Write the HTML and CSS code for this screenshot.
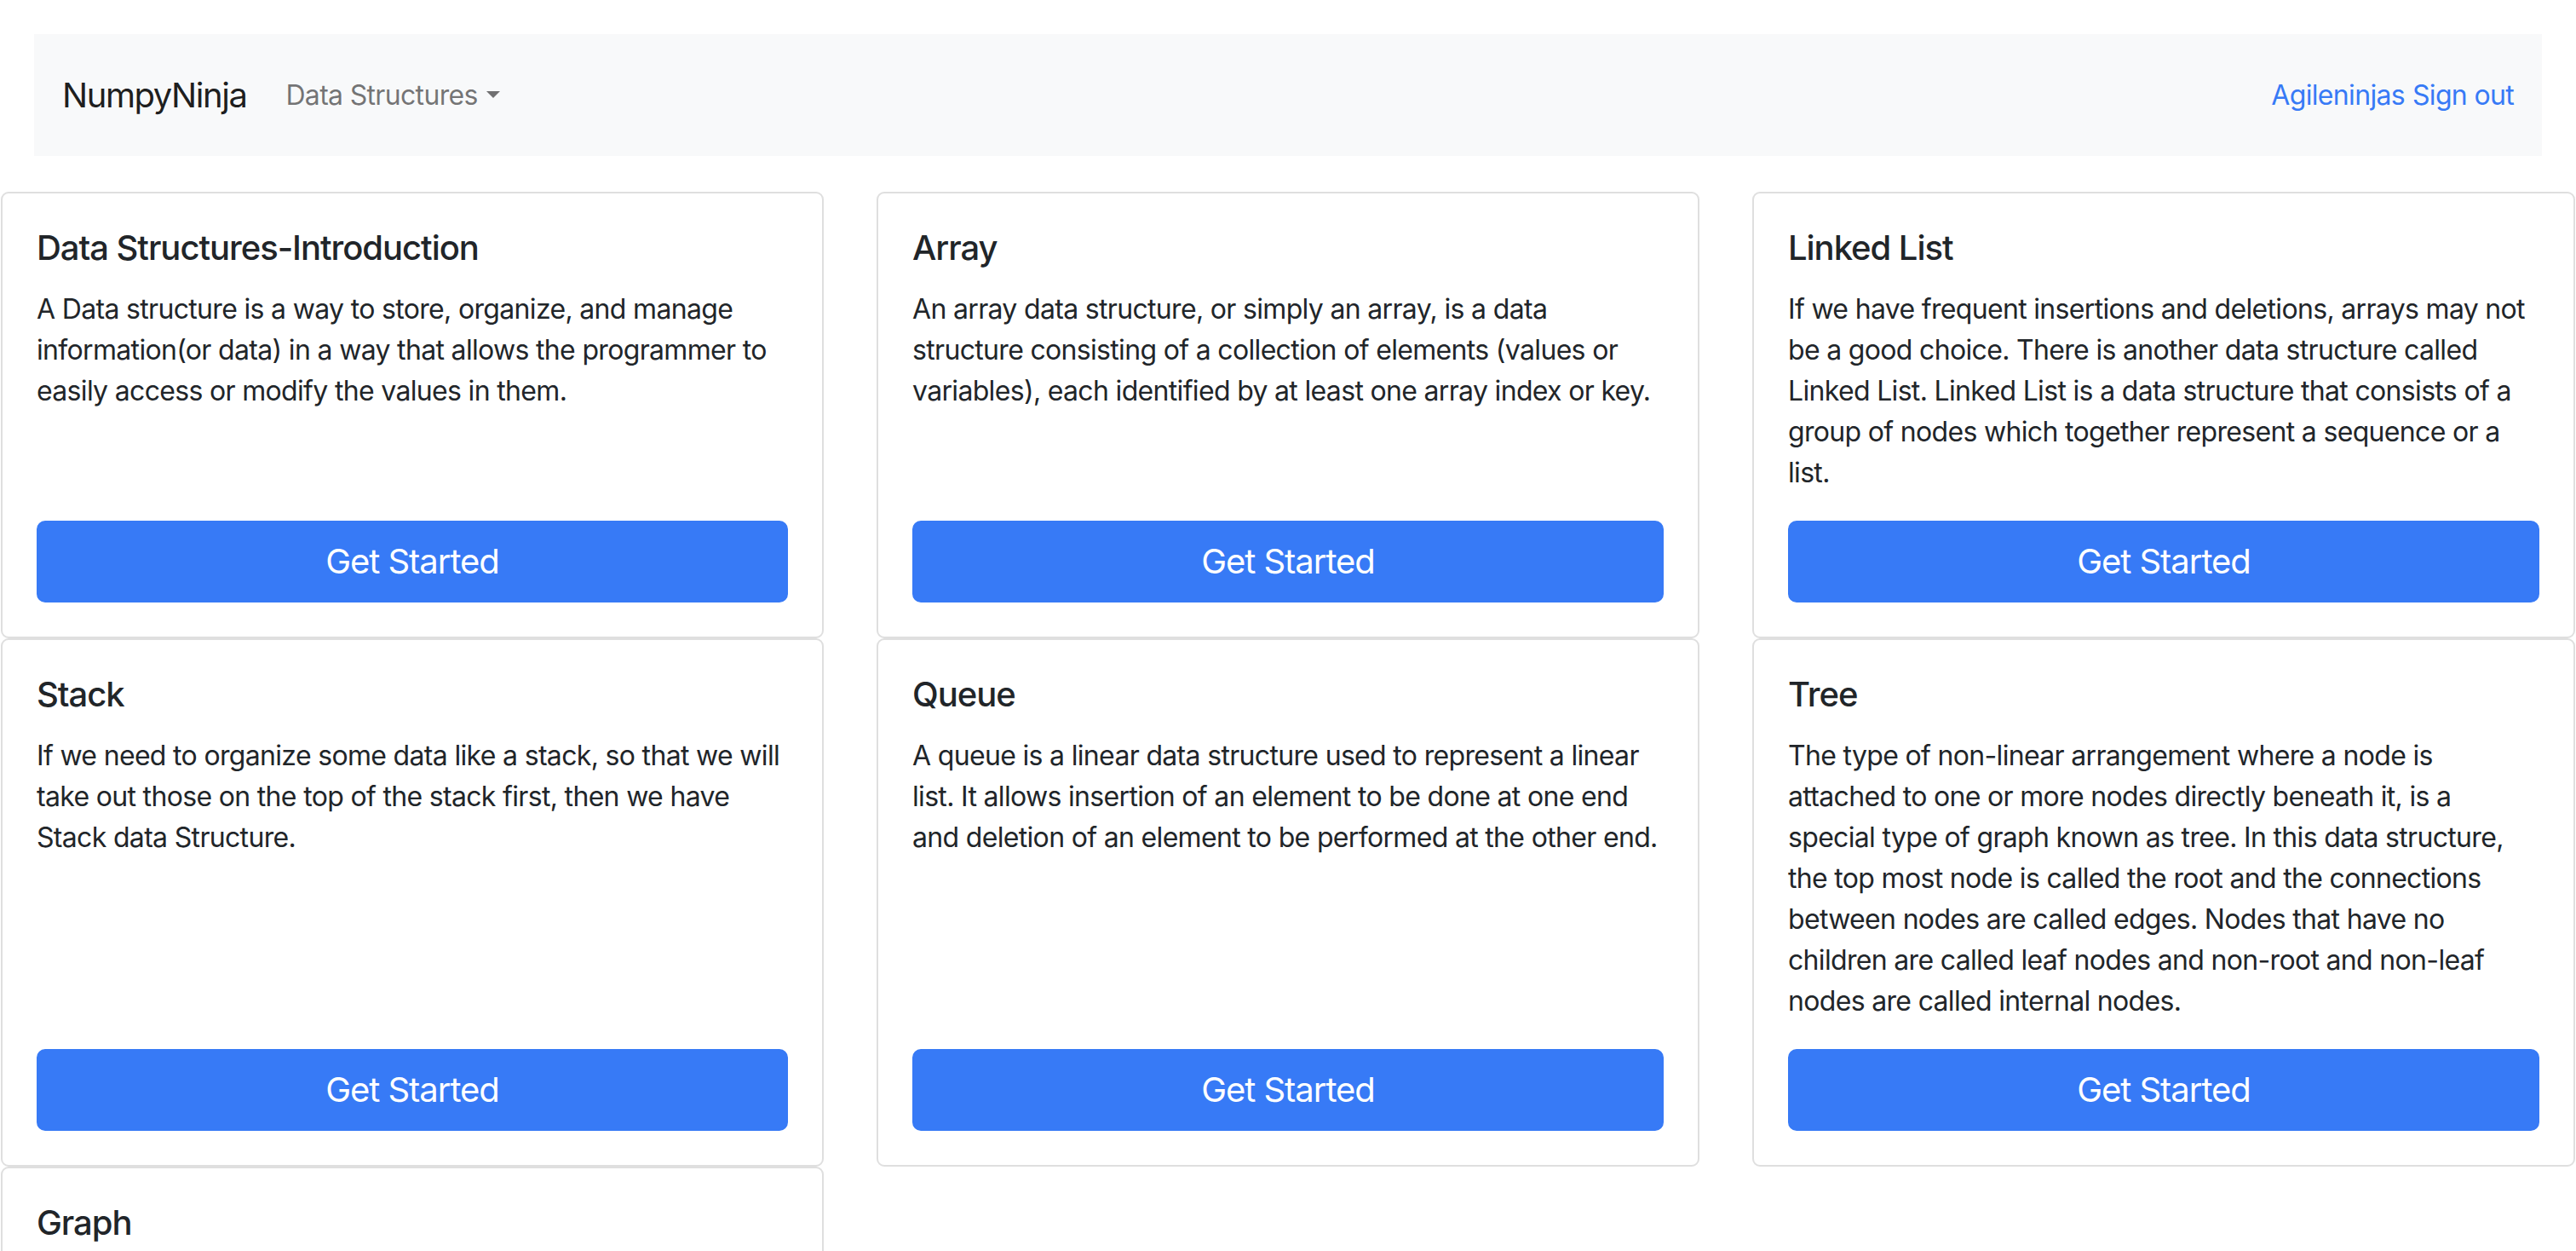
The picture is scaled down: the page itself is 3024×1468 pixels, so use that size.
FILE: index.html
```html
<!DOCTYPE html>
<html lang="en">
<head>
<meta charset="utf-8">
<title>NumpyNinja</title>
<link rel="stylesheet" href="styles.css">
</head>
<body>
<nav class="navbar">
  <div class="nav-left">
    <a class="brand" href="#">NumpyNinja</a>
    <a class="nav-link dropdown-toggle" href="#">Data Structures</a>
  </div>
  <div class="nav-right">
    <a class="user-link" href="#">Agileninjas</a>
    <a class="user-link" href="#">Sign out</a>
  </div>
</nav>

<main class="cards">
  <div class="card">
    <h5 class="card-title">Data Structures-Introduction</h5>
    <p class="card-text">A Data structure is a way to store, organize, and manage information(or data) in a way that allows the programmer to easily access or modify the values in them.</p>
    <a class="btn" href="#">Get Started</a>
  </div>
  <div class="card">
    <h5 class="card-title">Array</h5>
    <p class="card-text">An array data structure, or simply an array, is a data structure consisting of a collection of elements (values or variables), each identified by at least one array index or key.</p>
    <a class="btn" href="#">Get Started</a>
  </div>
  <div class="card">
    <h5 class="card-title">Linked List</h5>
    <p class="card-text">If we have frequent insertions and deletions, arrays may not be a good choice. There is another data structure called Linked List. Linked List is a data structure that consists of a group of nodes which together represent a sequence or a list.</p>
    <a class="btn" href="#">Get Started</a>
  </div>
  <div class="card">
    <h5 class="card-title">Stack</h5>
    <p class="card-text">If we need to organize some data like a stack, so that we will take out those on the top of the stack first, then we have Stack data Structure.</p>
    <a class="btn" href="#">Get Started</a>
  </div>
  <div class="card">
    <h5 class="card-title">Queue</h5>
    <p class="card-text">A queue is a linear data structure used to represent a linear list. It allows insertion of an element to be done at one end and deletion of an element to be performed at the other end.</p>
    <a class="btn" href="#">Get Started</a>
  </div>
  <div class="card">
    <h5 class="card-title">Tree</h5>
    <p class="card-text">The type of non-linear arrangement where a node is attached to one or more nodes directly beneath it, is a special type of graph known as tree. In this data structure, the top most node is called the root and the connections between nodes are called edges. Nodes that have no children are called leaf nodes and non-root and non-leaf nodes are called internal nodes.</p>
    <a class="btn" href="#">Get Started</a>
  </div>
  <div class="card">
    <h5 class="card-title">Graph</h5>
  </div>
</main>
</body>
</html>
```
FILE: styles.css
```css
* { box-sizing: border-box; }

body {
  margin: 0;
  font-family: Inter, "Liberation Sans", sans-serif;
  font-size: 32px;
  line-height: 48px;
  letter-spacing: -0.021em;
  color: #212529;
  background: #fff;
}

a { text-decoration: none; }

.navbar {
  margin: 40px 40px 0;
  height: 143px;
  background: #f8f9fa;
  display: flex;
  align-items: center;
  justify-content: space-between;
  padding: 0 33px;
}

.nav-left {
  display: flex;
  align-items: center;
}

.brand {
  font-size: 40px;
  line-height: 60px;
  color: rgba(0, 0, 0, 0.9);
  letter-spacing: -0.036em;
  margin-right: 46px;
}

.nav-link {
  color: rgba(0, 0, 0, 0.55);
  font-size: 32px;
  line-height: 48px;
}

.dropdown-toggle::after {
  content: "";
  display: inline-block;
  margin-left: 10px;
  vertical-align: 8px;
  border-top: 8px solid;
  border-left: 8px solid transparent;
  border-right: 8px solid transparent;
}

.nav-right {
  display: flex;
  gap: 9px;
}

.user-link {
  color: #377af6;
  font-size: 32px;
  line-height: 48px;
}

.cards {
  margin-top: 42px;
  padding: 0 1px;
  display: grid;
  grid-template-columns: repeat(3, 966px);
  justify-content: space-between;
}

.card {
  border: 2px solid #dfdfdf;
  border-radius: 9px;
  padding: 40px;
  display: flex;
  flex-direction: column;
  background: #fff;
}

.card-title {
  margin: 0 0 24px;
  font-size: 40px;
  line-height: 48px;
  font-weight: 500;
  letter-spacing: -0.026em;
}

.card-text {
  margin: 0 0 32px;
  flex-grow: 1;
}

.btn {
  display: block;
  height: 96px;
  padding: 16px 32px;
  border: 2px solid #377af6;
  border-radius: 10px;
  background: #377af6;
  color: #fff;
  font-size: 40px;
  line-height: 60px;
  letter-spacing: -0.026em;
  text-align: center;
}
```
